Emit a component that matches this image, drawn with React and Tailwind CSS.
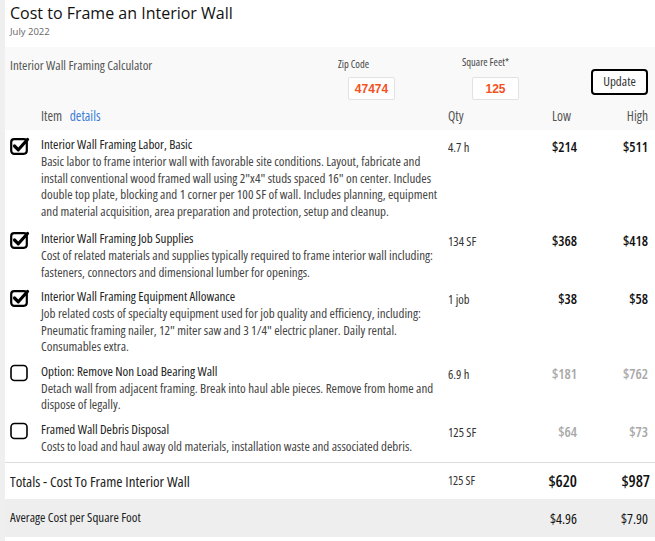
import React from "react";

const items = [
  {
    checked: true,
    title: "Interior Wall Framing Labor, Basic",
    desc: 'Basic labor to frame interior wall with favorable site conditions. Layout, fabricate and install conventional wood framed wall using 2"x4" studs spaced 16" on center. Includes double top plate, blocking and 1 corner per 100 SF of wall. Includes planning, equipment and material acquisition, area preparation and protection, setup and cleanup.',
    qty: "4.7 h",
    low: "$214",
    high: "$511",
  },
  {
    checked: true,
    title: "Interior Wall Framing Job Supplies",
    desc: "Cost of related materials and supplies typically required to frame interior wall including: fasteners, connectors and dimensional lumber for openings.",
    qty: "134 SF",
    low: "$368",
    high: "$418",
  },
  {
    checked: true,
    title: "Interior Wall Framing Equipment Allowance",
    desc: 'Job related costs of specialty equipment used for job quality and efficiency, including: Pneumatic framing nailer, 12" miter saw and 3 1/4" electric planer. Daily rental. Consumables extra.',
    qty: "1 job",
    low: "$38",
    high: "$58",
  },
  {
    checked: false,
    title: "Option: Remove Non Load Bearing Wall",
    desc: "Detach wall from adjacent framing. Break into haul able pieces. Remove from home and dispose of legally.",
    qty: "6.9 h",
    low: "$181",
    high: "$762",
  },
  {
    checked: false,
    title: "Framed Wall Debris Disposal",
    desc: "Costs to load and haul away old materials, installation waste and associated debris.",
    qty: "125 SF",
    low: "$64",
    high: "$73",
  },
];

const Checkbox = ({ checked }) =>
  checked ? (
    <svg width="20" height="18" viewBox="0 0 20 18" fill="none">
      <rect x="1.2" y="2.2" width="15.6" height="14.6" rx="3" stroke="#000" strokeWidth="2.2" />
      <path d="M4.5 9 L8.3 12.8 L17.5 2.5" stroke="#000" strokeWidth="3.2" strokeLinecap="round" strokeLinejoin="round" />
    </svg>
  ) : (
    <svg width="20" height="18" viewBox="0 0 20 18" fill="none">
      <rect x="1" y="1.5" width="16" height="15" rx="3.5" stroke="#000" strokeWidth="1.6" />
    </svg>
  );

const ItemRow = ({ item, first }) => (
  <div className={`flex pt-[6px] ${first ? "pb-[5px]" : "pb-[2px]"}`}>
    <div className="w-[31px] shrink-0 pt-[1px]">
      <Checkbox checked={item.checked} />
    </div>
    <div className="w-[407px] shrink-0">
      <div className="text-[13px] leading-[17px] font-medium text-[#222]">{item.title}</div>
      <div className="text-[13px] leading-[16.5px] text-[#444]">{item.desc}</div>
    </div>
    <div className="w-[70px] shrink-0 pt-[3px] text-[12.5px] leading-[17px] text-[#333]">{item.qty}</div>
    <div
      className={`w-[59px] shrink-0 pt-[2px] text-right text-[14px] leading-[17px] font-semibold ${
        item.checked ? "text-[#111]" : "text-[#a8a8a8]"
      }`}
    >
      {item.low}
    </div>
    <div
      className={`w-[71px] shrink-0 pt-[2px] text-right text-[14px] leading-[17px] font-semibold ${
        item.checked ? "text-[#111]" : "text-[#a8a8a8]"
      }`}
    >
      {item.high}
    </div>
  </div>
);

export default function App() {
  return (
    <div className="w-[655px] h-[541px] bg-[#efefef] pl-[5px] overflow-hidden font-['Open_Sans',sans-serif]">
      <div className="bg-white h-full">
        <div className="pl-[5px] pt-[1px] pb-[8px]">
          <h1 className="text-[16px] leading-[24px] text-[#111]">Cost to Frame an Interior Wall</h1>
          <div className="text-[9.5px] leading-[14px] text-[#666]">July 2022</div>
        </div>

        <div className="font-stretch-condensed">
          <div className="bg-[#f9f9f9] pl-[5px] pr-[7px]">
            <div className="flex h-[53px]">
              <div className="w-[328px] pt-[9px] text-[13px] leading-[18px] text-[#555]">
                Interior Wall Framing Calculator
              </div>
              <div className="w-[124px] pt-[11px]">
                <div className="text-[10.5px] leading-[12px] text-[#444]">Zip Code</div>
                <div className="ml-[10px] mt-[7px] w-[47px] h-[23px] bg-white border border-[#e2e2e2] rounded-[2px] flex items-center justify-center text-[12px] font-bold text-[#f4511e] font-['Liberation_Sans',sans-serif] font-stretch-normal">
                  47474
                </div>
              </div>
              <div className="w-[129px] pt-[9px]">
                <div className="text-[10.5px] leading-[12px] text-[#444]">Square Feet*</div>
                <div className="ml-[10px] mt-[9px] w-[47px] h-[23px] bg-white border border-[#e2e2e2] rounded-[2px] flex items-center justify-center text-[12px] font-bold text-[#f4511e] font-['Liberation_Sans',sans-serif] font-stretch-normal">
                  125
                </div>
              </div>
              <div className="pt-[22px]">
                <div className="w-[57px] h-[26px] border-2 border-black rounded-[4px] bg-white flex items-center justify-center text-[13px] text-[#333] font-stretch-semi-condensed">
                  Update
                </div>
              </div>
            </div>
            <div className="flex h-[30px] pt-[3px] items-center text-[13.5px] text-[#555]">
              <div className="w-[31px]" />
              <div className="w-[407px]">
                Item <span className="ml-[5px] text-[#3b7dd8]">details</span>
              </div>
              <div className="w-[70px]">Qty</div>
              <div className="w-[59px] text-right pr-[6px]">Low</div>
              <div className="w-[71px] text-right">High</div>
            </div>
          </div>

          <div className="pl-[5px] pr-[7px] pb-[6px]">
            {items.map((item, i) => (
              <ItemRow key={item.title} item={item} first={i === 0} />
            ))}
          </div>

          <div className="border-t border-[#ddd] pl-[5px] pr-[5px] flex h-[37px] items-center">
            <div className="w-[438px] text-[15px] text-[#222]">Totals - Cost To Frame Interior Wall</div>
            <div className="w-[70px] text-[12px] text-[#333]">125 SF</div>
            <div className="w-[59px] text-right text-[16px] font-semibold text-[#111]">$620</div>
            <div className="w-[73px] text-right text-[16px] font-semibold text-[#111]">$987</div>
          </div>
          <div className="bg-[#eeeeee] pl-[5px] pr-[7px] flex h-[38px] items-center">
            <div className="w-[508px] text-[13px] text-[#222]">Average Cost per Square Foot</div>
            <div className="w-[59px] text-right text-[14px] text-[#111]">$4.96</div>
            <div className="w-[71px] text-right text-[14px] text-[#111]">$7.90</div>
          </div>
        </div>
      </div>
    </div>
  );
}
